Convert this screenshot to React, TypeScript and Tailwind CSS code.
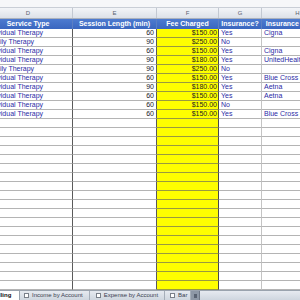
import React from "react";

type Row = { d: string; e: string; f: string; g: string; h: string };

const data: Row[] = [
  { d: "Individual Therapy", e: "60", f: "$150.00", g: "Yes", h: "Cigna" },
  { d: "Family Therapy", e: "90", f: "$250.00", g: "No", h: "" },
  { d: "Individual Therapy", e: "60", f: "$150.00", g: "Yes", h: "Cigna" },
  { d: "Individual Therapy", e: "90", f: "$180.00", g: "Yes", h: "UnitedHealthcare" },
  { d: "Family Therapy", e: "90", f: "$250.00", g: "No", h: "" },
  { d: "Individual Therapy", e: "60", f: "$150.00", g: "Yes", h: "Blue Cross" },
  { d: "Individual Therapy", e: "90", f: "$180.00", g: "Yes", h: "Aetna" },
  { d: "Individual Therapy", e: "60", f: "$150.00", g: "Yes", h: "Aetna" },
  { d: "Individual Therapy", e: "60", f: "$150.00", g: "No", h: "" },
  { d: "Individual Therapy", e: "60", f: "$150.00", g: "Yes", h: "Blue Cross" },
];

const rows: Row[] = [
  ...data,
  ...Array.from({ length: 19 }, () => ({ d: "", e: "", f: "", g: "", h: "" })),
];

function TabIcon() {
  return (
    <span className="inline-block w-[5px] h-[5px] border border-[#7a808a] bg-white mr-[3px] align-middle" />
  );
}

export default function App() {
  return (
    <div
      className="w-[300px] h-[300px] overflow-hidden bg-white flex flex-col"
      style={{ fontFamily: '"Liberation Sans", Arial, sans-serif' }}
    >
      {/* top strip */}
      <div className="h-[8px] shrink-0 bg-[#f6f7f9] border-b border-[#c9ced6]" />
      <div className="flex flex-col -ml-[16px] shrink-0">
        {/* column letters */}
        <div className="flex h-[11px] bg-gradient-to-b from-[#f3f5f8] to-[#dce1e8] border-b border-[#aab1bc] text-[6px] leading-[10px] text-[#5a6270]">
          <div className="w-[89px] shrink-0 text-center border-r border-[#c3c9d2]">D</div>
          <div className="w-[84px] shrink-0 text-center border-r border-[#c3c9d2]">E</div>
          <div className="w-[62px] shrink-0 text-center border-r border-[#c3c9d2]">F</div>
          <div className="w-[43px] shrink-0 text-center border-r border-[#c3c9d2]">G</div>
          <div className="w-[72px] shrink-0 text-center border-r border-[#c3c9d2]">H</div>
        </div>
        {/* header row */}
        <div className="flex h-[10px] bg-gradient-to-b from-[#4d7bd0] to-[#3a66bf] text-white font-bold text-[7px] leading-[9px] whitespace-nowrap">
          <div className="w-[89px] shrink-0 text-center border-r border-[#5b7fc4]">Service Type</div>
          <div className="w-[84px] shrink-0 text-center border-r border-[#5b7fc4]">Session Length (min)</div>
          <div className="w-[62px] shrink-0 text-center border-r border-[#5b7fc4]">Fee Charged</div>
          <div className="w-[43px] shrink-0 text-center border-r border-[#5b7fc4]">Insurance?</div>
          <div className="w-[72px] shrink-0 flex justify-center border-r border-[#5b7fc4]">
            <span>Insurance Provider</span>
          </div>
        </div>
        {/* data rows */}
        {rows.map((r, i) => (
          <div key={i} className="flex h-[9px] text-[7px] leading-[8px] whitespace-nowrap">
            <div className="w-[89px] shrink-0 pl-[2px] text-[#2b2ba6] border-r border-b border-r-[#5a5a5a] border-b-[#b4b4b4] overflow-hidden">
              {r.d}
            </div>
            <div className="w-[84px] shrink-0 pr-[2px] text-right text-[#222] border-r border-b border-r-[#5a5a5a] border-b-[#b4b4b4]">
              {r.e}
            </div>
            <div className="w-[62px] shrink-0 pr-[1px] text-right text-[#222] bg-[#ffff00] border-r border-b border-r-[#4a4a4a] border-b-[#9a9a40]">
              {r.f}
            </div>
            <div className="w-[43px] shrink-0 pl-[2px] text-[#2b2ba6] border-r border-b border-r-[#c4c4c4] border-b-[#b4b4b4]">
              {r.g}
            </div>
            <div className="w-[72px] shrink-0 pl-[2px] text-[#2b2ba6] border-r border-b border-r-[#c4c4c4] border-b-[#b4b4b4] overflow-hidden">
              {r.h}
            </div>
          </div>
        ))}
      </div>
      {/* tab bar */}
      <div className="flex-1 flex items-stretch bg-gradient-to-b from-[#e6eaf0] to-[#cfd6df] border-t border-[#9aa3ae] text-[6px] leading-[9px] text-[#3a4150] whitespace-nowrap">
        <div className="w-[20px] shrink-0 bg-white font-bold text-[#111] underline pl-[0px] border-r border-[#9aa3ae] overflow-hidden">
          <span className="-ml-[7px] inline-block">Billing</span>
        </div>
        <div className="flex items-center pl-[4px] pr-[6px] border-r border-[#a6aeb9]">
          <TabIcon />
          Income by Account
        </div>
        <div className="flex items-center pl-[6px] pr-[6px] border-r border-[#a6aeb9]">
          <TabIcon />
          Expense by Account
        </div>
        <div className="flex items-center pl-[5px] pr-[3px] border-r border-[#a6aeb9]">
          <TabIcon />
          Bar
        </div>
        <div className="w-[9px] shrink-0 bg-[#8e98a6] border-r border-[#6f7886] flex items-center justify-center">
          <span className="w-[3px] h-[4px] bg-[#5a6372]" />
        </div>
        <div className="flex-1" />
      </div>
    </div>
  );
}
